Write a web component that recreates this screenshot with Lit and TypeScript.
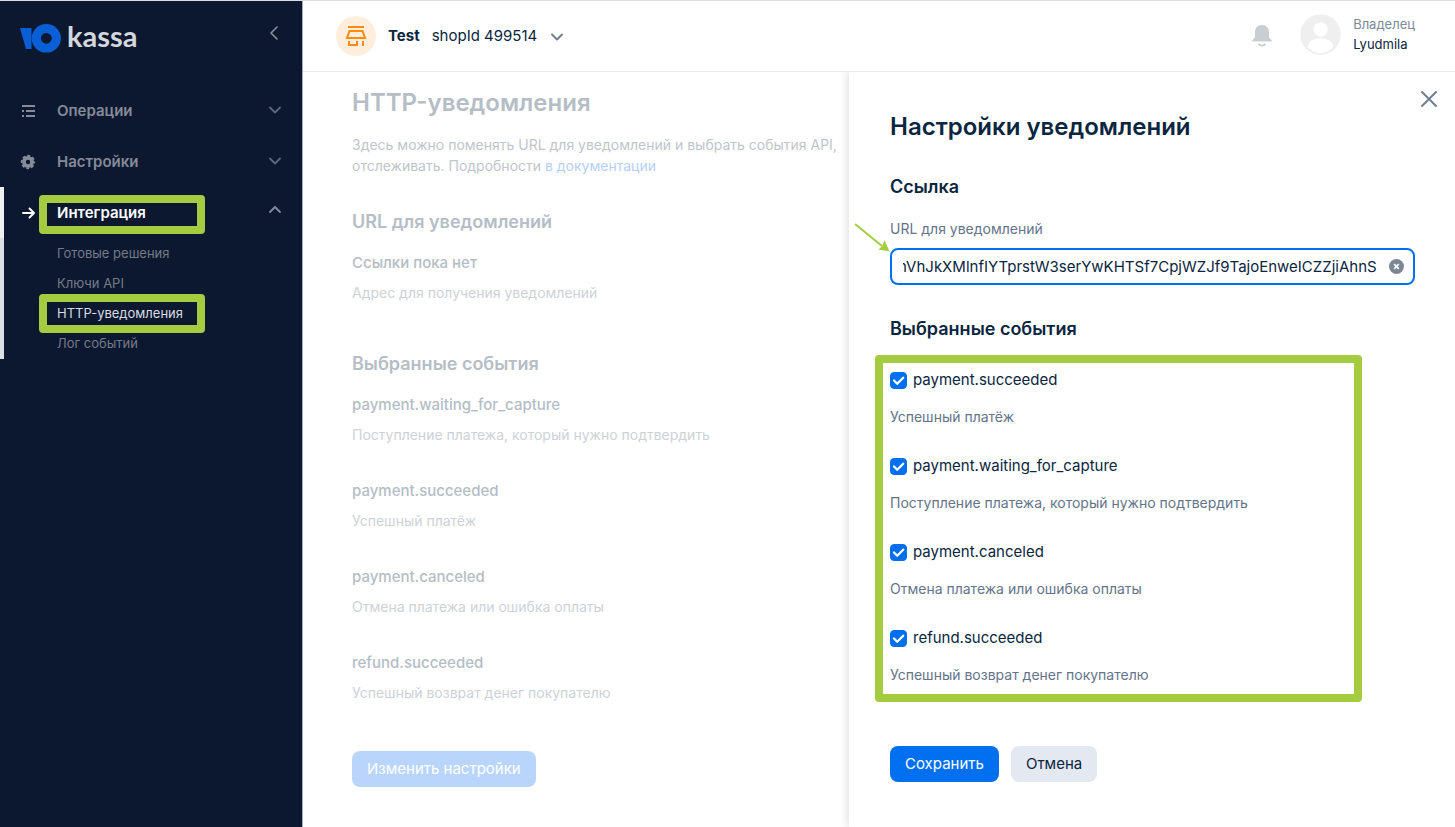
import { LitElement, html, css, svg, nothing } from "lit";
import { customElement, state, query } from "lit/decorators.js";
import { classMap } from "lit/directives/class-map.js";

interface PaymentEvent {
  id: string;
  name: string;
  text: string;
}

const succeeded: PaymentEvent = { id: "succeeded", name: "payment.succeeded", text: "Успешный платёж" };
const waiting: PaymentEvent = {
  id: "waiting",
  name: "payment.waiting_for_capture",
  text: "Поступление платежа, который нужно подтвердить",
};
const canceled: PaymentEvent = { id: "canceled", name: "payment.canceled", text: "Отмена платежа или ошибка оплаты" };
const refund: PaymentEvent = { id: "refund", name: "refund.succeeded", text: "Успешный возврат денег покупателю" };

const chevron = (d: string) => svg`<path d=${d} fill="none" stroke="currentColor" stroke-width="1.8" stroke-linecap="round" stroke-linejoin="round"/>`;
const down = html`<svg class="chevron" width="14" height="18" viewBox="0 0 14 18" aria-hidden="true">${chevron("M2 5.5l5 5 5-5")}</svg>`;
const up = html`<svg class="chevron" width="14" height="18" viewBox="0 0 14 18" aria-hidden="true">${chevron("M2 8l5-5 5 5")}</svg>`;

@customElement("kassa-sidebar")
export class KassaSidebar extends LitElement {
  static styles = css`
    :host {
      display: block;
      background: #0c182f;
      color: #858b98;
      font-family: Inter, "Noto Sans", sans-serif;
      border-right: 1px solid #a9afba;
      box-sizing: border-box;
    }
    .top {
      display: flex;
      justify-content: space-between;
      align-items: flex-start;
      padding: 19px 20px 0;
      height: 84px;
      box-sizing: border-box;
    }
    .logo {
      display: flex;
      align-items: center;
      gap: 6px;
      color: #d4d7dd;
      text-decoration: none;
      font: 700 29px/32px Lato, sans-serif;
    }
    .word {
      padding-bottom: 4px;
    }
    button {
      background: none;
      border: 0;
      margin: 0;
      color: inherit;
      font: inherit;
      cursor: pointer;
    }
    .collapse {
      padding: 4px 0 0;
      width: 16px;
      height: 22px;
    }
    .group {
      display: grid;
      grid-template-columns: 20px 1fr 14px;
      column-gap: 17px;
      align-items: center;
      width: 100%;
      height: 51px;
      padding: 0 20px;
      text-align: left;
      font-weight: 600;
      font-size: 15px;
      line-height: 22px;
      position: relative;
    }
    .glyph {
      display: block;
    }
    .chevron {
      display: block;
      color: #5f6878;
    }
    .active {
      color: #fff;
      border-left: 4px solid #eef0f2;
      padding-left: 16px;
    }
    .active .chevron {
      color: #858b98;
    }
    .sub {
      list-style: none;
      margin: 0;
      padding: 0 0 1px 53px;
      border-left: 4px solid #dcdfe3;
    }
    .sub li {
      position: relative;
      height: 30px;
      display: flex;
      align-items: center;
    }
    .sub a {
      color: #747b89;
      font-size: 13px;
      line-height: 20px;
      text-decoration: none;
    }
    .sub .current {
      color: #d9dce1;
    }
    .mark {
      position: absolute;
      left: 35px;
      top: 8px;
      width: 166px;
      height: 39px;
      box-sizing: border-box;
      border: 8px solid #a5cc41;
      border-radius: 4px;
      pointer-events: none;
    }
    .sub .mark {
      left: -18px;
      top: -4px;
    }
  `;

  private links = ["Готовые решения", "Ключи API", "HTTP-уведомления", "Лог событий"];

  render() {
    return html`
      <div class="top">
        <a class="logo" href="#">
          <svg width="41" height="30" viewBox="0 0 41 30" aria-hidden="true">
            <path d="M0 5H11.500V26H6z" fill="#0a5fd6" />
            <ellipse cx="26.300" cy="15.300" rx="14.600" ry="14.300" fill="#0a5fd6" />
            <circle cx="26.300" cy="15.300" r="5.400" fill="#0c182f" />
          </svg>
          <span class="word">kassa</span>
        </a>
        <button class="collapse" aria-label="Свернуть меню">
          <svg class="glyph" width="16" height="16" viewBox="0 0 16 16">
            <path d="M11 2L5 8l6 6" fill="none" stroke="#858b98" stroke-width="1.700" stroke-linecap="round" stroke-linejoin="round" />
          </svg>
        </button>
      </div>
      <nav>
        <button class="group">
          <svg class="glyph" width="16" height="16" viewBox="0 0 16 16" fill="currentColor">
            <path d="M2 2h13v2H2zM2 7h2v2H2zM6 7h9v2H6zM2 12h2v2H2zM6 12h9v2H6z" />
          </svg>
          <span>Операции</span>${down}
        </button>
        <button class="group">
          <svg class="glyph" width="16" height="16" viewBox="0 0 16 16">
            <circle cx="8" cy="8" r="4.100" fill="none" stroke="currentColor" stroke-width="3.800" />
            <circle cx="8" cy="8" r="6.300" fill="none" stroke="currentColor" stroke-width="1.800" stroke-dasharray="2.900 2.048" stroke-dashoffset="1.450" />
          </svg>
          <span>Настройки</span>${down}
        </button>
        <button class="group active" aria-expanded="true">
          <svg class="glyph" width="16" height="16" viewBox="0 0 16 16">
            <path d="M3 8h11M9.500 3.500L14 8l-4.500 4.500" fill="none" stroke="currentColor" stroke-width="1.900" stroke-linecap="round" stroke-linejoin="round" />
          </svg>
          <span>Интеграция</span>${up}
          <span class="mark"></span>
        </button>
        <ul class="sub">
          ${this.links.map((link, i) => {
            const current = i === 2;
            return html`<li>
              <a href="#" class=${classMap({ current })}>${link}</a>
              ${current ? html`<span class="mark"></span>` : nothing}
            </li>`;
          })}
        </ul>
      </nav>
    `;
  }
}

@customElement("kassa-header")
export class KassaHeader extends LitElement {
  static styles = css`
    :host {
      display: flex;
      align-items: center;
      justify-content: space-between;
      height: 70px;
      padding: 0 40px 0 33px;
      border-bottom: 1px solid #e9eaeb;
      color: #0a2540;
      font-family: Inter, "Noto Sans", sans-serif;
      background: #fff;
    }
    button {
      background: none;
      border: 0;
      padding: 0;
      margin: 0;
      color: inherit;
      font: inherit;
      cursor: pointer;
    }
    svg {
      display: block;
    }
    .shop {
      display: flex;
      align-items: center;
      gap: 12px;
      font-size: 15px;
      line-height: 22px;
    }
    .badge {
      width: 40px;
      height: 40px;
      border-radius: 50%;
      background: #ffeedd;
      display: grid;
      place-items: center;
    }
    .side {
      display: flex;
      align-items: center;
      gap: 28px;
    }
    .user {
      display: flex;
      align-items: center;
      gap: 12px;
      padding-bottom: 4px;
      text-align: left;
      font-size: 13px;
      line-height: 20px;
    }
    .role {
      display: block;
      color: #7d8a9a;
    }
    .who {
      display: block;
    }
  `;

  render() {
    return html`
      <button class="shop">
        <span class="badge">
          <svg width="22" height="22" viewBox="0 0 22 22" fill="none" stroke="#ff8c0a" stroke-width="2">
            <path d="M3 2h16M4.500 6h13l2.500 7H2zM4 16v4h8v-4M18 16v5" />
          </svg>
        </span>
        <strong>Test</strong>
        <span>shopId 499514</span>
        <svg width="16" height="16" viewBox="0 0 16 16">
          <path d="M3 6.500l5 5 5-5" fill="none" stroke="#6f7f90" stroke-width="2" stroke-linecap="round" stroke-linejoin="round" />
        </svg>
      </button>
      <div class="side">
        <button aria-label="Оповещения">
          <svg width="20" height="22" viewBox="0 0 20 22">
            <path d="M10 0C5.500 0 3 3 3 7v4.500C3 14 0 14 0 16.500h20C20 14 17 14 17 11.500V7c0-4-2.500-7-7-7z" fill="#c9ced3" />
            <path d="M6.500 18.700c1.500 2.500 5.500 2.500 7 0" fill="none" stroke="#c9ced3" stroke-width="1.800" />
          </svg>
        </button>
        <button class="user">
          <svg width="41" height="41" viewBox="0 0 41 41">
            <circle cx="20.500" cy="20.500" r="20.300" fill="#efefef" />
            <circle cx="20.500" cy="15.500" r="7.200" fill="#fff" />
            <path d="M8 33.500C8 27 13 24.500 20.500 24.500S33 27 33 33.500C29.500 37 25.500 39 20.500 39S11.500 37 8 33.500z" fill="#fff" />
          </svg>
          <span><span class="role">Владелец</span><span class="who">Lyudmila</span></span>
        </button>
      </div>
    `;
  }
}

@customElement("kassa-summary")
export class KassaSummary extends LitElement {
  static styles = css`
    :host {
      display: block;
      padding: 15px 0 0 49px;
      color: #b5bdc6;
      font: 15px/22px Inter, "Noto Sans", sans-serif;
    }
    h1 {
      margin: 0 0 15px;
      font-size: 24px;
      line-height: 32px;
      font-weight: 600;
    }
    .intro {
      margin: 0 0 33px;
      font-size: 14px;
      line-height: 21px;
      color: #bfc5cc;
    }
    a {
      color: #b4d0fc;
      text-decoration: none;
    }
    h2 {
      margin: 0 0 17px;
      font-size: 18px;
      line-height: 26px;
      font-weight: 600;
    }
    .list {
      display: grid;
      gap: 34px;
      margin: 0 0 47px;
    }
    .name {
      font-weight: 500;
    }
    .text {
      margin: 8px 0 0;
      font-size: 14px;
      color: #cdd2d8;
    }
    button {
      height: 36px;
      padding: 0 15px;
      border: 0;
      border-radius: 8px;
      background: #bad5fc;
      color: #fff;
      font: inherit;
    }
  `;

  private row(name: string, text: string) {
    return html`<div>
      <dt class="name">${name}</dt>
      <dd class="text">${text}</dd>
    </div>`;
  }

  render() {
    return html`
      <h1>HTTP-уведомления</h1>
      <p class="intro">
        Здесь можно поменять URL для уведомлений и выбрать события API,<br />отслеживать. Подробности
        <a href="#">в документации</a>
      </p>
      <h2>URL для уведомлений</h2>
      <dl class="list">${this.row("Ссылки пока нет", "Адрес для получения уведомлений")}</dl>
      <h2>Выбранные события</h2>
      <dl class="list">${[waiting, succeeded, canceled, refund].map((e) => this.row(e.name, e.text))}</dl>
      <button>Изменить настройки</button>
    `;
  }
}

@customElement("kassa-drawer")
export class KassaDrawer extends LitElement {
  static styles = css`
    :host {
      display: block;
      position: relative;
      padding: 39px 40px 0 41px;
      background: #fff;
      box-shadow: -2px 0 8px rgba(0, 0, 0, 0.12);
      clip-path: inset(0 0 0 -16px);
      color: #0a2540;
      font: 15px/22px Inter, "Noto Sans", sans-serif;
    }
    svg {
      display: block;
    }
    button {
      font: inherit;
      border: 0;
      padding: 0;
      margin: 0;
      cursor: pointer;
    }
    .close {
      position: absolute;
      top: 18px;
      right: 17px;
      background: none;
    }
    h1 {
      margin: 0 0 31px;
      font-size: 24px;
      line-height: 32px;
      font-weight: 600;
    }
    h2 {
      margin: 0;
      font-size: 18px;
      line-height: 26px;
      font-weight: 600;
    }
    .label {
      display: block;
      margin: 18px 0 8px;
      font-size: 14px;
      color: #64748b;
    }
    .field {
      position: relative;
      display: flex;
      align-items: center;
      gap: 12px;
      height: 37px;
      box-sizing: border-box;
      border: 2px solid #0070f0;
      border-radius: 8px;
      padding: 0 9px 0 11px;
      margin-bottom: 31px;
    }
    .url {
      flex: 1;
      min-width: 0;
      border: 0;
      padding: 0;
      outline: none;
      background: none;
      color: inherit;
      font: inherit;
    }
    .clear {
      background: none;
    }
    .arrow {
      position: absolute;
      left: -39px;
      top: -28px;
      pointer-events: none;
    }
    .events {
      width: 487px;
      max-width: 100%;
      box-sizing: border-box;
      margin: 13px 0 44px -15px;
      padding: 6px 7px 8px;
      border: 8px solid #a5cc41;
      border-radius: 4px;
      display: grid;
      gap: 27px;
    }
    .check {
      display: flex;
      align-items: center;
      gap: 6px;
    }
    .check input {
      appearance: none;
      width: 17px;
      height: 17px;
      margin: 0;
      border: 1px solid #a8b3c0;
      border-radius: 4px;
      grid-area: 1 / 1;
    }
    .check input:checked {
      border-color: #0070f0;
      background: #0070f0;
    }
    .box {
      display: grid;
      place-items: center;
    }
    .tick {
      grid-area: 1 / 1;
      pointer-events: none;
    }
    .text {
      margin: 15px 0 0;
      font-size: 14px;
      color: #64748b;
    }
    .actions {
      display: flex;
      gap: 12px;
    }
    .actions button {
      height: 36px;
      padding: 0 15px;
      border-radius: 8px;
    }
    .actions .save {
      background: #0070f0;
      color: #fff;
    }
    .actions .cancel {
      background: #e3e8f1;
      color: #0a2540;
    }
  `;

  @state() private url = "nVhJkXMlnfIYTprstW3serYwKHTSf7CpjWZJf9TajoEnweICZZjiAhnS";
  @query(".url") private field!: HTMLInputElement;

  firstUpdated() {
    this.field.scrollLeft = this.field.scrollWidth;
  }

  private clear() {
    this.url = "";
  }

  render() {
    return html`
      <button class="close" aria-label="Закрыть">
        <svg width="18" height="18" viewBox="0 0 18 18">
          <path d="M2 2l14 14M16 2L2 16" stroke="#6f7f90" stroke-width="2" stroke-linecap="round" />
        </svg>
      </button>
      <h1>Настройки уведомлений</h1>
      <h2>Ссылка</h2>
      <label class="label" for="url">URL для уведомлений</label>
      <div class="field">
        <input class="url" id="url" type="text" spellcheck="false" .value=${this.url} />
        <button class="clear" aria-label="Очистить" @click=${this.clear}>
          <svg width="15" height="15" viewBox="0 0 15 15">
            <circle cx="7.500" cy="7.500" r="7.500" fill="#7b8794" />
            <path d="M5.200 5.200l4.600 4.600M9.800 5.200L5.200 9.800" stroke="#fff" stroke-width="1.700" />
          </svg>
        </button>
        <svg class="arrow" width="38" height="32" viewBox="0 0 38 32" aria-hidden="true">
          <path d="M2 2l27 22" stroke="#a5cc41" stroke-width="2" />
          <path d="M36.500 29.500L25.500 27.500l3.800-3.400 2.200-6z" fill="#a5cc41" />
        </svg>
      </div>
      <h2>Выбранные события</h2>
      <div class="events">
        ${[succeeded, waiting, canceled, refund].map(
          (e) => html`<div>
            <div class="check">
              <span class="box">
                <input type="checkbox" id=${e.id} checked />
                <svg class="tick" width="13" height="13" viewBox="0 0 13 13" aria-hidden="true">
                  <path d="M2 6.500l3.200 3.200 6-6" fill="none" stroke="#fff" stroke-width="2.300" stroke-linecap="round" stroke-linejoin="round" />
                </svg>
              </span>
              <label for=${e.id}>${e.name}</label>
            </div>
            <p class="text">${e.text}</p>
          </div>`,
        )}
      </div>
      <div class="actions">
        <button class="save">Сохранить</button>
        <button class="cancel">Отмена</button>
      </div>
    `;
  }
}

@customElement("app-root")
export class AppRoot extends LitElement {
  static styles = css`
    :host {
      display: grid;
      grid-template-columns: 303px minmax(0, 1fr);
      min-height: 100vh;
      box-sizing: border-box;
      border-top: 1px solid #dcdddd;
      background: #fff;
    }
    .page {
      display: flex;
      flex-direction: column;
      min-width: 0;
    }
    .body {
      flex: 1;
      display: grid;
      grid-template-columns: minmax(0, 1fr) minmax(0, 606px);
    }
  `;

  render() {
    return html`
      <kassa-sidebar></kassa-sidebar>
      <div class="page">
        <kassa-header></kassa-header>
        <main class="body">
          <kassa-summary></kassa-summary>
          <kassa-drawer></kassa-drawer>
        </main>
      </div>
    `;
  }
}
